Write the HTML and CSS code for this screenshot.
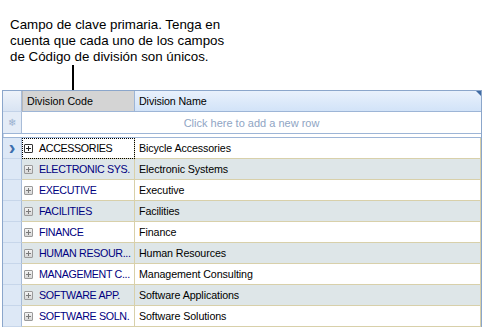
FILE: index.html
```html
<!DOCTYPE html>
<html lang="es">
<head>
    <meta charset="UTF-8">
    <title>Division Codes</title>
    <link rel="stylesheet" href="styles.css">
</head>
<body>
    <div class="callout">
        <p>Campo de clave primaria. Tenga en<br>cuenta que cada uno de los campos<br>de Código de división son únicos.</p>
        <div class="leader"></div>
    </div>

    <div class="grid">
        <div class="row header">
            <div class="ind"></div>
            <div class="cell code sorted">Division Code</div>
            <div class="cell name">Division Name<span class="corner"></span></div>
        </div>
        <div class="row newrow">
            <div class="ind"><span class="star">&#10052;</span></div>
            <div class="cell hint">Click here to add a new row</div>
        </div>
        <div class="rows">
            <div class="row current">
                <div class="ind"><span class="arrow">&#8250;</span></div>
                <div class="cell code focus"><span class="exp"></span>ACCESSORIES</div>
                <div class="cell name">Bicycle Accessories</div>
            </div>
            <div class="row alt">
                <div class="ind"></div>
                <div class="cell code"><span class="exp"></span>ELECTRONIC SYS.</div>
                <div class="cell name">Electronic Systems</div>
            </div>
            <div class="row">
                <div class="ind"></div>
                <div class="cell code"><span class="exp"></span>EXECUTIVE</div>
                <div class="cell name">Executive</div>
            </div>
            <div class="row alt">
                <div class="ind"></div>
                <div class="cell code"><span class="exp"></span>FACILITIES</div>
                <div class="cell name">Facilities</div>
            </div>
            <div class="row">
                <div class="ind"></div>
                <div class="cell code"><span class="exp"></span>FINANCE</div>
                <div class="cell name">Finance</div>
            </div>
            <div class="row alt">
                <div class="ind"></div>
                <div class="cell code"><span class="exp"></span>HUMAN RESOUR...</div>
                <div class="cell name">Human Resources</div>
            </div>
            <div class="row">
                <div class="ind"></div>
                <div class="cell code"><span class="exp"></span>MANAGEMENT C...</div>
                <div class="cell name">Management Consulting</div>
            </div>
            <div class="row alt">
                <div class="ind"></div>
                <div class="cell code"><span class="exp"></span>SOFTWARE APP.</div>
                <div class="cell name">Software Applications</div>
            </div>
            <div class="row">
                <div class="ind"></div>
                <div class="cell code"><span class="exp"></span>SOFTWARE SOLN.</div>
                <div class="cell name">Software Solutions</div>
            </div>
        </div>
    </div>
</body>
</html>
```

FILE: styles.css
```css
body {
    margin: 0;
    background: #fff;
    font-family: "Liberation Sans", Arial, sans-serif;
    color: #000;
    overflow: hidden;
}
.callout {
    padding: 17px 0 0 10px;
}
.callout p {
    margin: 0;
    font-size: 13.33px;
    line-height: 16px;
}
.leader {
    width: 2px;
    height: 25px;
    margin: 0 0 0 62px;
    background: #000;
}
.grid {
    width: 478px;
    margin-left: 2px;
    border: 1px solid #8ba6cb;
    border-bottom: none;
    box-shadow: inset 1px 0 0 #c9d8ec;
    font-size: 10.7px;
}
.row {
    display: flex;
    height: 21px;
}
.ind {
    width: 19px;
    flex: none;
    background: #dde8f6;
    border-right: 1px solid #a8bcd8;
    border-bottom: 1px solid #c2d2e8;
    box-sizing: border-box;
    display: flex;
    align-items: center;
    justify-content: center;
}
.cell {
    box-sizing: border-box;
    display: flex;
    align-items: center;
    white-space: nowrap;
    overflow: hidden;
}
.code {
    width: 113px;
    flex: none;
}
.name {
    flex: 1;
    padding-left: 4px;
    letter-spacing: -0.1px;
}

/* header */
.header .ind {
    background: linear-gradient(#eef3fa, #d9e4f3);
}
.header .cell {
    border-bottom: 1px solid #9db5d6;
    border-right: 1px solid #9db5d6;
    padding-left: 4px;
    height: 21px;
}
.header .sorted {
    background: #d4d4d4;
    border-left: 1px solid #b8b8b8;
}
.header .name {
    position: relative;
    background: linear-gradient(#e9f1fc, #d2e3f8);
    border-right: none;
}
.corner {
    position: absolute;
    right: 0;
    top: 0;
    border-top: 5px solid #3f6ba3;
    border-left: 5px solid transparent;
}

/* add-new row */
.newrow {
    height: 21px;
    border-bottom: 1px solid #9db5d6;
}
.newrow .ind {
    border-bottom: none;
    background: #e4ecf7;
}
.star {
    color: #9ab0cf;
    font-size: 10px;
}
.hint {
    flex: 1;
    justify-content: center;
    color: #8fa5c4;
    font-size: 11px;
}
.rows {
    margin-top: 3px;
    border-top: 1px solid #9db5d6;
}

/* data rows */
.rows .row .cell {
    border-bottom: 1px solid #d8d0aa;
}
.rows .code {
    border-right: 1px solid #d8d0aa;
    padding-left: 2px;
    color: #000080;
    letter-spacing: -0.35px;
}
.rows .name {
    border-right: 1px solid #d8d0aa;
}
.rows .ind {
    border-bottom-color: #c7d6ea;
}
.alt .cell {
    background: #dee6e8;
}
.current .code {
    color: #000;
    outline: 1px dotted #000;
    outline-offset: -1px;
}
.arrow {
    color: #3d6fae;
    font-size: 20px;
    font-weight: bold;
    line-height: 14px;
    margin-top: -2px;
}
.exp {
    width: 7px;
    height: 7px;
    flex: none;
    margin-right: 6px;
    border: 1px solid #9a9a9a;
    border-radius: 1px;
    background: linear-gradient(#f4f4f4, #d6d6d6);
    position: relative;
}
.exp::before, .exp::after {
    content: "";
    position: absolute;
    background: #7a7a7a;
}
.exp::before {
    left: 1px;
    top: 3px;
    width: 5px;
    height: 1px;
}
.exp::after {
    left: 3px;
    top: 1px;
    width: 1px;
    height: 5px;
}
.current .exp {
    border-color: #333;
    background: #fff;
}
.current .exp::before, .current .exp::after {
    background: #222;
}
```
